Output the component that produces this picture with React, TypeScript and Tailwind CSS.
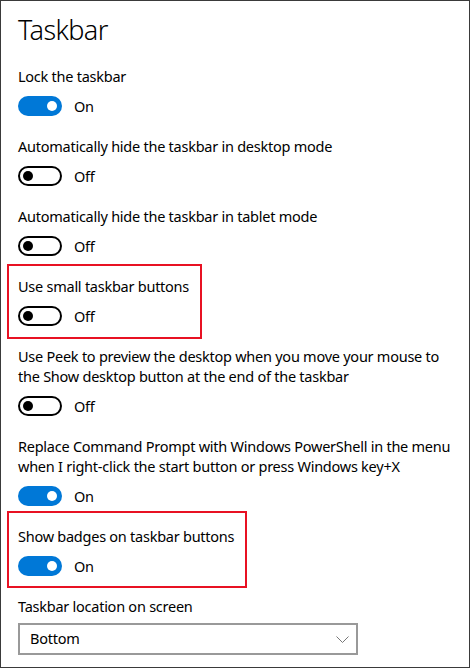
import React from "react";

type Item = {
  label: string[];
  on: boolean;
  box?: { w: number; top: number; h: number };
};

const items: Item[] = [
  { label: ["Lock the taskbar"], on: true },
  { label: ["Automatically hide the taskbar in desktop mode"], on: false },
  { label: ["Automatically hide the taskbar in tablet mode"], on: false },
  { label: ["Use small taskbar buttons"], on: false, box: { w: 195, top: -12, h: 75 } },
  {
    label: [
      "Use Peek to preview the desktop when you move your mouse to",
      "the Show desktop button at the end of the taskbar",
    ],
    on: false,
  },
  {
    label: [
      "Replace Command Prompt with Windows PowerShell in the menu",
      "when I right-click the start button or press Windows key+X",
    ],
    on: true,
  },
  { label: ["Show badges on taskbar buttons"], on: true, box: { w: 240, top: -15, h: 77 } },
];

const Toggle = ({ on }: { on: boolean }) =>
  on ? (
    <div className="w-[44px] h-[20px] rounded-full bg-[#0078d7] flex items-center justify-end pr-[5px]">
      <div className="w-[10px] h-[10px] rounded-full bg-white" />
    </div>
  ) : (
    <div className="w-[44px] h-[20px] rounded-full border-2 border-black flex items-center pl-[3px]">
      <div className="w-[10px] h-[10px] rounded-full bg-black" />
    </div>
  );

export default function App() {
  return (
    <div
      className="w-[470px] h-[668px] border border-[#3a3a3a] bg-white text-black pl-[17px] pt-[10px] overflow-hidden"
      style={{ fontFamily: '"Noto Sans", "Open Sans", sans-serif' }}
    >
      <h1 className="text-[27px] leading-[38px] font-light tracking-[-0.6px] mb-[17px]">
        Taskbar
      </h1>

      {items.map((item, i) => (
        <div key={i} className="relative pb-[20px]">
          {item.box && (
            <div
              className="absolute left-[-11px] border-2 border-[#e81123] pointer-events-none"
              style={{ width: item.box.w, top: item.box.top, height: item.box.h }}
            />
          )}
          <div className="text-[14.5px] leading-[20px] tracking-[-0.25px] whitespace-nowrap">
            {item.label.map((l, j) => (
              <div key={j}>{l}</div>
            ))}
          </div>
          <div className="flex items-center gap-[12px] mt-[10px]">
            <Toggle on={item.on} />
            <span className="text-[14.5px] leading-[20px] tracking-[-0.25px]">
              {item.on ? "On" : "Off"}
            </span>
          </div>
        </div>
      ))}

      <div className="text-[14.5px] leading-[20px] tracking-[-0.25px]">
        Taskbar location on screen
      </div>
      <div className="mt-[7px] w-[340px] h-[32px] border-2 border-[#999999] flex items-center justify-between pl-[10px] pr-[7px]">
        <span className="text-[14.5px] tracking-[-0.25px]">Bottom</span>
        <svg width="13" height="7" viewBox="0 0 13 7" fill="none">
          <path d="M0.5 0.5l6 6 6-6" stroke="#777" strokeWidth="1" />
        </svg>
      </div>
    </div>
  );
}
